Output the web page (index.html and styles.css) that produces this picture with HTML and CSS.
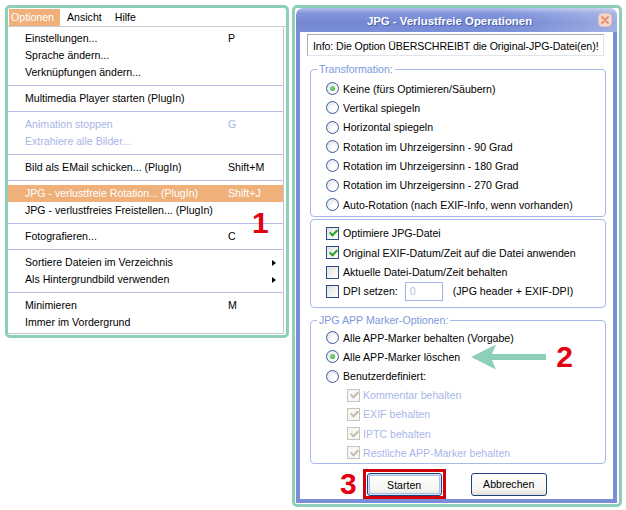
FILE: index.html
```html
<!DOCTYPE html>
<html lang="de">
<head>
<meta charset="UTF-8">
<meta name="viewport" content="width=device-width, initial-scale=1.0">
<title>JPG - Verlustfreie Operationen</title>
<link rel="stylesheet" href="styles.css">
</head>
<body>
<div class="page">
    <div class="frame menu-frame">
        <div class="menubar">
            <span class="mb-item open">Optionen</span>
            <span class="mb-item">Ansicht</span>
            <span class="mb-item">Hilfe</span>
        </div>
        <div class="popup">
            <div class="item"><span>Einstellungen...</span><span class="key">P</span></div>
            <div class="item"><span>Sprache ändern...</span></div>
            <div class="item"><span>Verknüpfungen ändern...</span></div>
            <div class="sep"></div>
            <div class="item"><span>Multimedia Player starten (PlugIn)</span></div>
            <div class="sep"></div>
            <div class="item disabled"><span>Animation stoppen</span><span class="key">G</span></div>
            <div class="item disabled"><span>Extrahiere alle Bilder...</span></div>
            <div class="sep"></div>
            <div class="item"><span>Bild als EMail schicken... (PlugIn)</span><span class="key">Shift+M</span></div>
            <div class="sep"></div>
            <div class="item hot"><span>JPG - verlustfreie Rotation... (PlugIn)</span><span class="key">Shift+J</span></div>
            <div class="item"><span>JPG - verlustfreies Freistellen... (PlugIn)</span></div>
            <div class="sep"></div>
            <div class="item"><span>Fotografieren...</span><span class="key">C</span></div>
            <div class="sep"></div>
            <div class="item"><span>Sortiere Dateien im Verzeichnis</span><span class="sub"></span></div>
            <div class="item"><span>Als Hintergrundbild verwenden</span><span class="sub"></span></div>
            <div class="sep"></div>
            <div class="item"><span>Minimieren</span><span class="key">M</span></div>
            <div class="item"><span>Immer im Vordergrund</span></div>
        </div>
        <div class="mark mark-1">1</div>
    </div>

    <div class="frame dlg-frame">
        <div class="dialog">
            <div class="titlebar">
                <span class="title">JPG - Verlustfreie Operationen</span>
                <span class="close">
                    <svg width="14" height="14" viewBox="0 0 14 14">
                        <rect x="0.5" y="0.5" width="13" height="13" rx="4" fill="#F2D7D0" stroke="#E8C4BC"/>
                        <path d="M4 4 L10 10 M10 4 L4 10" stroke="#E8916F" stroke-width="2" stroke-linecap="round"/>
                    </svg>
                </span>
            </div>
            <div class="dlg-body">
                <div class="info">Info: Die Option ÜBERSCHREIBT die Original-JPG-Datei(en)!</div>

                <fieldset class="group">
                    <legend>Transformation:</legend>
                    <div class="row"><span class="radio on"></span>Keine (fürs Optimieren/Säubern)</div>
                    <div class="row"><span class="radio"></span>Vertikal spiegeln</div>
                    <div class="row"><span class="radio"></span>Horizontal spiegeln</div>
                    <div class="row"><span class="radio"></span>Rotation im Uhrzeigersinn - 90 Grad</div>
                    <div class="row"><span class="radio"></span>Rotation im Uhrzeigersinn - 180 Grad</div>
                    <div class="row"><span class="radio"></span>Rotation im Uhrzeigersinn - 270 Grad</div>
                    <div class="row"><span class="radio"></span>Auto-Rotation (nach EXIF-Info, wenn vorhanden)</div>
                </fieldset>

                <fieldset class="group checks">
                    <div class="row"><span class="check on"></span>Optimiere JPG-Datei</div>
                    <div class="row"><span class="check on"></span>Original EXIF-Datum/Zeit auf die Datei anwenden</div>
                    <div class="row"><span class="check"></span>Aktuelle Datei-Datum/Zeit behalten</div>
                    <div class="row"><span class="check"></span>DPI setzen:<span class="num">0</span><span class="dpi-note">(JPG header + EXIF-DPI)</span></div>
                </fieldset>

                <fieldset class="group markers">
                    <legend>JPG APP Marker-Optionen:</legend>
                    <div class="row"><span class="radio"></span>Alle APP-Marker behalten (Vorgabe)</div>
                    <div class="row">
                        <span class="radio on"></span>Alle APP-Marker löschen
                        <span class="callout">
                            <svg width="75" height="26" viewBox="0 0 75 26">
                                <path d="M0 13 L25 0.5 L21 10 L75 10 L75 16 L21 16 L25 25.5 Z" fill="#8ECFB7"/>
                            </svg>
                            <span class="mark">2</span>
                        </span>
                    </div>
                    <div class="row"><span class="radio"></span>Benutzerdefiniert:</div>
                    <div class="row sub off"><span class="check on"></span>Kommentar behalten</div>
                    <div class="row sub off"><span class="check on"></span>EXIF behalten</div>
                    <div class="row sub off"><span class="check on"></span>IPTC behalten</div>
                    <div class="row sub off"><span class="check on"></span>Restliche APP-Marker behalten</div>
                </fieldset>

                <div class="buttons">
                    <span class="mark">3</span>
                    <span class="focus-box"><button class="btn default">Starten</button></span>
                    <button class="btn">Abbrechen</button>
                </div>
            </div>
        </div>
    </div>
</div>
</body>
</html>
```

FILE: styles.css
```css
body {
    margin: 0;
    background: #fff;
    color: #000;
    font-family: "Liberation Sans", Arial, sans-serif;
    font-size: 10.6px;
}
.page {
    display: flex;
    align-items: flex-start;
    gap: 3px;
    padding: 5px 0 0 5px;
}
.frame {
    border: 3px solid #8ECFB7;
    border-radius: 5px;
    background: #fff;
}

/* left: menu */
.menu-frame {
    position: relative;
    width: 278px;
    height: 327px;
}
.menubar {
    display: flex;
    box-sizing: border-box;
    height: 19px;
    padding: 1px 0 0 1px;
    border-bottom: 1px solid #CBCED8;
}
.mb-item {
    line-height: 17px;
    padding: 0 6px 0 2px;
    margin-right: 5px;
}
.mb-item.open {
    background: #EFB07A;
    color: #fff;
}
.popup {
    margin-right: 2px;
    padding: 3px 0 2px;
    border-right: 1px solid #C2C6D2;
    border-bottom: 1px solid #C2C6D2;
}
.item {
    display: grid;
    grid-template-columns: 1fr 43px 6px;
    height: 17px;
    line-height: 17px;
    padding: 0 6px 0 17px;
    white-space: nowrap;
}
.item .key {
    grid-column: 2;
}
.item .sub {
    grid-column: 3;
    align-self: center;
    width: 0;
    height: 0;
    margin-left: 1px;
    border-left: 4px solid #000;
    border-top: 3.5px solid transparent;
    border-bottom: 3.5px solid transparent;
}
.item.disabled {
    color: #A7B5E6;
}
.item.hot {
    background: #EFB07A;
    color: #fff;
}
.sep {
    height: 1px;
    margin: 4px 0;
    background: #B5BDE6;
}
.mark {
    font-size: 30px;
    line-height: 30px;
    font-weight: bold;
    color: #E3000F;
}
.mark-1 {
    position: absolute;
    left: 244px;
    top: 200px;
}

/* right: dialog */
.dlg-frame {
    width: 324px;
    height: 496px;
}
.dialog {
    display: flex;
    flex-direction: column;
    width: 321px;
    height: 495px;
    margin-left: 1px;
    border-radius: 7px 7px 0 0;
    overflow: hidden;
}
.titlebar {
    display: flex;
    align-items: center;
    height: 24px;
    flex: none;
    background:
        linear-gradient(to right, rgba(255,255,255,0) 65%, rgba(255,255,255,0.3)),
        linear-gradient(to bottom, #B3C0ED 0%, #8396DB 22%, #7387D4 60%, #7C8FD8 100%);
}
.title {
    flex: 1;
    text-align: center;
    padding: 3px 0 0 5px;
    line-height: 21px;
    font-size: 11.4px;
    font-weight: bold;
    color: #fff;
    text-shadow: 1px 1px 0 #4A5EA8;
}
.close {
    display: flex;
    margin-right: 5px;
}
.dlg-body {
    flex: 1;
    background: #fff;
    border: solid #7A8DD6;
    border-width: 0 4px 4px;
}
.info {
    box-sizing: border-box;
    height: 22px;
    margin: 2px 9px 0 7px;
    padding: 2px 0 0 5px;
    line-height: 18px;
    letter-spacing: -0.08px;
    white-space: nowrap;
    border: 1px solid #E2E4EC;
    border-top-color: #A9ABB6;
    border-left-color: #A9ABB6;
}
.group {
    margin: 6px 7px 0 10px;
    padding: 3px 0 2px;
    border: 1px solid #A7B8EA;
    border-radius: 4px;
    min-width: 0;
}
.group legend {
    margin-left: 6px;
    padding: 0 2px;
    line-height: 14px;
    color: #7C98E0;
}
.group.checks {
    margin-top: 2px;
    padding: 3.5px 0 6px;
}
.group.markers {
    margin-top: 5px;
    padding: 1px 0 1px;
}
.row {
    display: flex;
    align-items: center;
    height: 19.33px;
    padding-left: 15px;
    white-space: nowrap;
}
.markers .row {
    height: 19.2px;
}
.row.sub {
    padding-left: 36px;
}
.row.off {
    color: #A9B6EA;
}
.radio,
.check {
    position: relative;
    flex: none;
    width: 11px;
    height: 11px;
    margin-right: 4px;
    border: 1px solid #3E5D96;
}
.radio {
    border-radius: 50%;
    background: radial-gradient(circle at 65% 65%, #fff 20%, #D9DBE4);
}
.radio.on::after {
    content: "";
    position: absolute;
    left: 3px;
    top: 3px;
    width: 5px;
    height: 5px;
    border-radius: 50%;
    background: radial-gradient(circle at 40% 40%, #8BDC84, #23A323);
}
.check {
    border-color: #284C8C;
    background: linear-gradient(135deg, #E2E2DC, #fff);
}
.check.on::after {
    content: "";
    position: absolute;
    left: 3.5px;
    top: 0.5px;
    width: 3px;
    height: 6px;
    border: solid #22A322;
    border-width: 0 2px 2px 0;
    transform: rotate(45deg);
}
.row.sub .check {
    margin-right: 3px;
    border-color: #C7C5B9;
    background: #F7F7F3;
}
.row.sub .check.on::after {
    border-color: #BDBDB3;
}
.num {
    box-sizing: border-box;
    width: 38px;
    height: 19px;
    margin-left: 7px;
    padding-left: 4px;
    line-height: 17px;
    color: #B7C0E0;
    border: 1px solid #A2B3E8;
}
.dpi-note {
    margin-left: 10px;
}
.callout {
    display: flex;
    align-items: center;
    margin-left: auto;
    margin-right: 32px;
}
.callout .mark {
    margin-left: 10px;
}
.buttons {
    display: flex;
    align-items: center;
    margin-top: 5px;
    padding-left: 40px;
}
.buttons .mark {
    margin-right: 6px;
}
.focus-box {
    display: flex;
    padding: 1px 1px 0;
    border: 3px solid #D2000A;
}
.btn {
    box-sizing: border-box;
    width: 75px;
    height: 23px;
    padding: 0;
    font: inherit;
    color: #000;
    border: 1px solid #1F3F7E;
    border-radius: 3px;
    background: linear-gradient(to bottom, #fff 0%, #F6F6F3 70%, #E3E1DA 100%);
}
.btn.default {
    box-shadow: inset 0 0 0 1px #D0E4FB, inset 0 0 0 2px #A6BEEB;
}
.buttons > .btn {
    width: 76px;
    margin-left: 25px;
}
```
